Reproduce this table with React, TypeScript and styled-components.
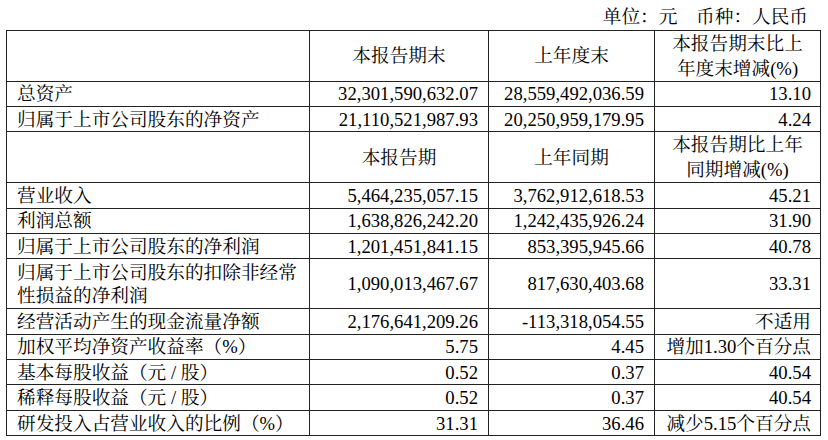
import React from "react";
import styled, { createGlobalStyle } from "styled-components";

const GlobalStyle = createGlobalStyle`
  html, body {
    margin: 0;
    padding: 0;
    background: #ffffff;
  }
  body {
    font-family: "Liberation Serif", "Noto Serif CJK SC", "Noto Sans CJK SC", serif;
    color: #000;
  }
`;

const Page = styled.div`
  width: 828px;
  height: 440px;
  padding-left: 6px;
  box-sizing: border-box;
  font-size: 18.67px;
`;

const UnitLine = styled.div`
  width: 814px;
  height: 29.5px;
  box-sizing: border-box;
  padding-top: 6px;
  padding-right: 12px;
  line-height: 21px;
  text-align: right;
  white-space: pre;
`;

const Table = styled.table`
  width: 814px;
  border-collapse: collapse;
  table-layout: fixed;
  font-size: 18.67px;
`;

const Row = styled.tr<{ $tall?: boolean }>`
  height: ${(p) => (p.$tall ? "49.8px" : "25.4px")};
`;

const Cell = styled.td`
  border: 1px solid #222;
  padding: 0;
  vertical-align: middle;
  white-space: nowrap;
  overflow: hidden;
`;

const HeadCell = styled(Cell)`
  text-align: center;
  line-height: 25px;
`;

const LabelCell = styled(Cell)`
  text-align: left;
  padding-left: 10px;
  line-height: 23px;
`;

const NumCell = styled(Cell)<{ $pr?: number }>`
  text-align: right;
  padding-right: ${(p) => p.$pr ?? 10}px;
  line-height: 23px;
`;

type DataRow = {
  label: React.ReactNode;
  a: string;
  b: string;
  c: string;
  tall?: boolean;
};

const top: DataRow[] = [
  { label: "总资产", a: "32,301,590,632.07", b: "28,559,492,036.59", c: "13.10" },
  { label: "归属于上市公司股东的净资产", a: "21,110,521,987.93", b: "20,250,959,179.95", c: "4.24" },
];

const bottom: DataRow[] = [
  { label: "营业收入", a: "5,464,235,057.15", b: "3,762,912,618.53", c: "45.21" },
  { label: "利润总额", a: "1,638,826,242.20", b: "1,242,435,926.24", c: "31.90" },
  { label: "归属于上市公司股东的净利润", a: "1,201,451,841.15", b: "853,395,945.66", c: "40.78" },
  {
    label: (
      <>
        归属于上市公司股东的扣除非经常
        <br />
        性损益的净利润
      </>
    ),
    a: "1,090,013,467.67",
    b: "817,630,403.68",
    c: "33.31",
    tall: true,
  },
  { label: "经营活动产生的现金流量净额", a: "2,176,641,209.26", b: "-113,318,054.55", c: "不适用" },
  { label: "加权平均净资产收益率（%）", a: "5.75", b: "4.45", c: "增加1.30个百分点" },
  { label: "基本每股收益（元 / 股）", a: "0.52", b: "0.37", c: "40.54" },
  { label: "稀释每股收益（元 / 股）", a: "0.52", b: "0.37", c: "40.54" },
  { label: "研发投入占营业收入的比例（%）", a: "31.31", b: "36.46", c: "减少5.15个百分点" },
];

const renderRows = (rows: DataRow[]) =>
  rows.map((r, i) => (
    <Row key={i} $tall={r.tall}>
      <LabelCell>{r.label}</LabelCell>
      <NumCell>{r.a}</NumCell>
      <NumCell>{r.b}</NumCell>
      <NumCell $pr={9}>{r.c}</NumCell>
    </Row>
  ));

export default function App() {
  return (
    <>
      <GlobalStyle />
      <Page>
        <UnitLine>单位：元　币种：人民币</UnitLine>
        <Table>
          <colgroup>
            <col style={{ width: 303 }} />
            <col style={{ width: 179 }} />
            <col style={{ width: 166 }} />
            <col style={{ width: 166 }} />
          </colgroup>
          <tbody>
            <Row $tall>
              <HeadCell />
              <HeadCell>本报告期末</HeadCell>
              <HeadCell>上年度末</HeadCell>
              <HeadCell>
                本报告期末比上
                <br />
                年度末增减(%)
              </HeadCell>
            </Row>
            {renderRows(top)}
            <Row $tall>
              <HeadCell />
              <HeadCell>本报告期</HeadCell>
              <HeadCell>上年同期</HeadCell>
              <HeadCell>
                本报告期比上年
                <br />
                同期增减(%)
              </HeadCell>
            </Row>
            {renderRows(bottom)}
          </tbody>
        </Table>
      </Page>
    </>
  );
}
